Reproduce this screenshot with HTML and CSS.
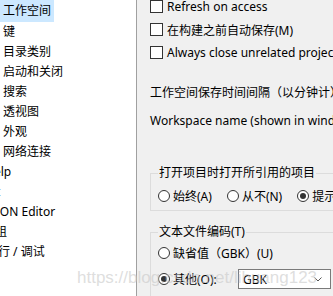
FILE: index.html
```html
<!DOCTYPE html>
<html lang="zh">
<head>
<meta charset="utf-8">
<link rel="stylesheet" href="styles.css">
</head>
<body>
<div class="nav">
  <div class="item selected"><span>工作空间</span></div>
  <div class="item sub">键</div>
  <div class="item sub">目录类别</div>
  <div class="item sub">启动和关闭</div>
  <div class="item sub">搜索</div>
  <div class="item sub">透视图</div>
  <div class="item sub">外观</div>
  <div class="item sub">网络连接</div>
  <div class="item top cut-help">Help</div>
  <div class="item top cut-ant">Ant</div>
  <div class="item top cut-json">JSON Editor</div>
  <div class="item top cut-group">分组</div>
  <div class="item top cut-run">运行 / 调试</div>
</div>
<div class="panel">
  <div class="check-row"><span class="box"></span><span>Refresh on access</span></div>
  <div class="check-row"><span class="box"></span><span>在构建之前自动保存(M)</span></div>
  <div class="check-row"><span class="box"></span><span>Always close unrelated projects without prompt</span></div>
  <div class="line interval">工作空间保存时间间隔（以分钟计）：</div>
  <div class="line">Workspace name (shown in window title):</div>
  <fieldset class="group g1">
    <legend>打开项目时打开所引用的项目</legend>
    <div class="radio-row">
      <label class="opt"><span class="radio"></span>始终(A)</label>
      <label class="opt"><span class="radio"></span>从不(N)</label>
      <label class="opt"><span class="radio on"></span>提示(P)</label>
    </div>
  </fieldset>
  <fieldset class="group g2">
    <legend>文本文件编码(T)</legend>
    <div class="radio-row r1">
      <label class="opt"><span class="radio"></span>缺省值（GBK）(U)</label>
    </div>
    <div class="radio-row r2">
      <label class="opt other"><span class="radio on"></span>其他(O):</label>
      <div class="combo"><span>GBK</span><svg class="chev" width="8" height="5" viewBox="0 0 8 5"><path d="M0.5 0.5 L4 4 L7.5 0.5" fill="none" stroke="#555" stroke-width="1"/></svg></div>
    </div>
  </fieldset>
</div>
<div class="watermark">https://blog.csdn.net/lihuang123</div>
</body>
</html>
```

FILE: styles.css
```css
html, body {
  margin: 0;
  padding: 0;
}
body {
  width: 333px;
  height: 296px;
  overflow: hidden;
  display: flex;
  position: relative;
  font-family: "Noto Sans", "Noto Sans CJK SC", sans-serif;
  font-size: 12px;
  color: #000;
}
.nav {
  width: 136px;
  flex: none;
  background: #fff;
  border-right: 1px solid #a0a0a0;
  overflow: hidden;
}
.item {
  height: 20px;
  line-height: 20px;
  white-space: nowrap;
}
.item.sub {
  padding-left: 3px;
}
.item.selected {
  height: 22px;
  line-height: 22px;
}
.item.selected span {
  display: inline-block;
  background: #cce8ff;
  padding: 0 3px;
}
.cut-help { margin-left: -15px; }
.cut-ant { margin-left: -19px; }
.cut-json { margin-left: -10px; }
.cut-group { margin-left: -17px; }
.cut-run { margin-left: -14px; }
.panel {
  flex: 1;
  background: #f0f0f0;
  padding-left: 13px;
  overflow: hidden;
  white-space: nowrap;
}
.check-row {
  display: flex;
  align-items: center;
  height: 13px;
  margin-bottom: 10px;
  gap: 4px;
}
.box {
  width: 11px;
  height: 11px;
  border: 1px solid #333;
  background: #fff;
  flex: none;
}
.line {
  height: 28px;
  line-height: 28px;
}
.interval {
  margin-top: 20px;
}
.group {
  border: 1px solid #dcdcdc;
  margin: 0;
  padding: 0 0 6px 7px;
  width: 240px;
  box-sizing: border-box;
}
.group legend {
  padding: 0 1px;
  line-height: 16px;
}
.g1 {
  margin-top: 30px;
}
.g2 {
  margin-top: 13px;
  padding-bottom: 20px;
}
.radio-row {
  display: flex;
  align-items: center;
}
.g1 .radio-row {
  margin-top: 7px;
  height: 16px;
}
.g2 .r1 {
  margin-top: 5px;
  height: 16px;
}
.g2 .r2 {
  margin-top: 8px;
  height: 20px;
}
.opt {
  display: flex;
  align-items: center;
  margin-right: 15px;
}
.radio {
  width: 10px;
  height: 10px;
  border: 1px solid #333;
  border-radius: 50%;
  background: #fff;
  margin-right: 3px;
  position: relative;
  flex: none;
}
.radio.on::after {
  content: "";
  position: absolute;
  left: 2px;
  top: 2px;
  width: 6px;
  height: 6px;
  border-radius: 50%;
  background: #333;
}
.other {
  width: 67px;
  margin-right: 13px;
}
.combo {
  width: 79px;
  height: 18px;
  border: 1px solid #7a7a7a;
  background: #fff;
  display: flex;
  align-items: center;
  justify-content: space-between;
  padding: 0 8px 0 4px;
  box-sizing: content-box;
  flex: none;
}
.chev {
  display: block;
}
.watermark {
  position: absolute;
  left: 77px;
  top: 268px;
  font-family: "Liberation Sans", sans-serif;
  font-size: 17px;
  color: rgba(200, 200, 200, 0.6);
  white-space: nowrap;
  pointer-events: none;
}
```
